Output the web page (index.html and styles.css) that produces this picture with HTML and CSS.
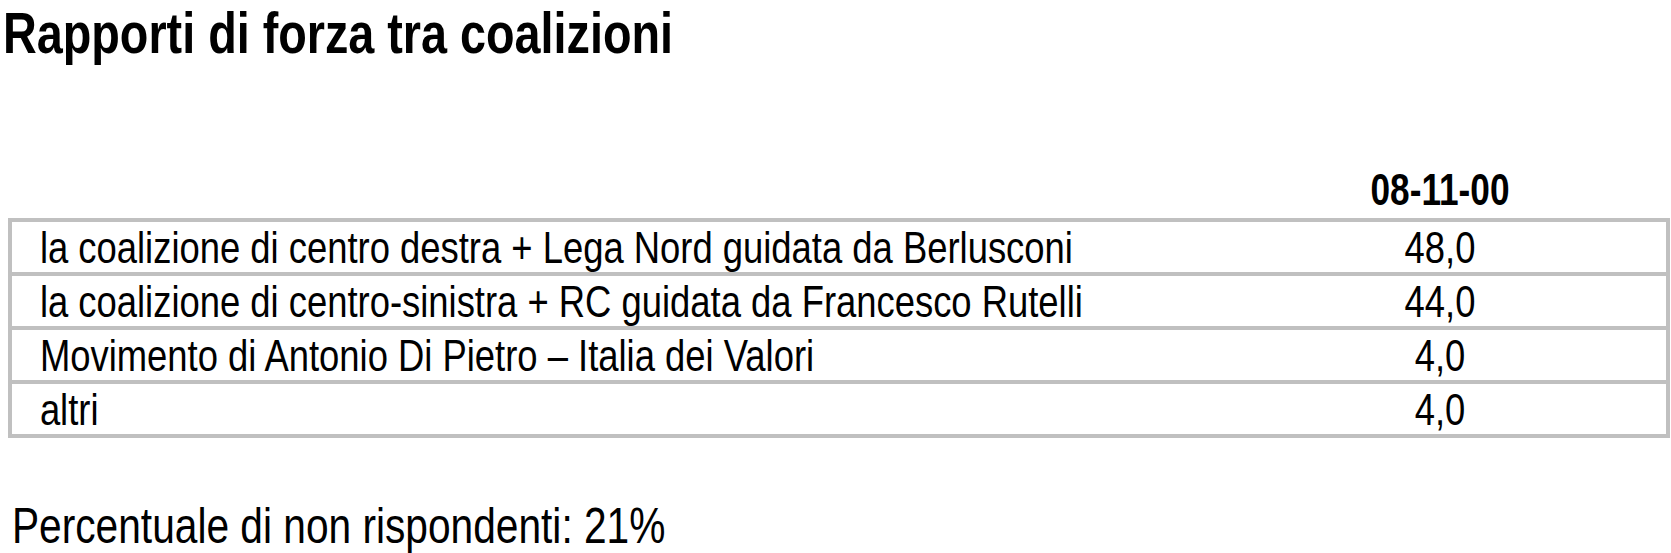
FILE: index.html
```html
<!DOCTYPE html>
<html lang="it">
<head>
<meta charset="utf-8">
<title>Rapporti di forza tra coalizioni</title>
<link rel="stylesheet" href="styles.css">
</head>
<body>
<h1 class="title"><span class="narrow">Rapporti di forza tra coalizioni</span></h1>
<div class="survey">
  <div class="head">
    <span></span>
    <span class="date">08-11-00</span>
  </div>
  <div class="table">
    <div class="row"><span class="label">la coalizione di centro destra + Lega Nord guidata da Berlusconi</span><span class="value">48,0</span></div>
    <div class="row"><span class="label">la coalizione di centro-sinistra + RC guidata da Francesco Rutelli</span><span class="value">44,0</span></div>
    <div class="row"><span class="label">Movimento di Antonio Di Pietro – Italia dei Valori</span><span class="value">4,0</span></div>
    <div class="row"><span class="label">altri</span><span class="value">4,0</span></div>
  </div>
</div>
<p class="note"><span class="narrow">Percentuale di non rispondenti: 21%</span></p>
</body>
</html>
```
FILE: styles.css
```css
html, body {
  margin: 0;
  padding: 0;
  background: #ffffff;
  color: #000000;
  font-family: "Liberation Sans", Arial, sans-serif;
}

.narrow {
  display: inline-block;
  white-space: nowrap;
  transform: scaleX(0.82);
  transform-origin: 0 50%;
}

.title {
  margin: 0;
  padding: 1px 0 0 3px;
  font-size: 57px;
  line-height: 64px;
  font-weight: bold;
}

.survey {
  margin: 101px 1px 0 8px;
}

.head {
  display: grid;
  grid-template-columns: minmax(0, 1fr) 452px;
  padding: 0 4px;
  margin-bottom: 4px;
}

.date {
  text-align: center;
  font-weight: bold;
  font-size: 44px;
  line-height: 48px;
  transform: scaleX(0.8);
}

.table {
  border: 4px solid #c0c0c0;
}

.row {
  display: grid;
  grid-template-columns: minmax(0, 1fr) 452px;
  font-size: 44.4px;
  line-height: 49px;
  padding-top: 1px;
}

.row + .row {
  border-top: 4px solid #c0c0c0;
}

.label {
  padding-left: 34px;
  white-space: nowrap;
  transform: scaleX(0.82);
  transform-origin: 0 50%;
}

.value {
  text-align: center;
  transform: scaleX(0.82);
}

.note {
  margin: 60px 0 0 0;
  padding-left: 12px;
  font-size: 49.6px;
  line-height: 56px;
}
```
